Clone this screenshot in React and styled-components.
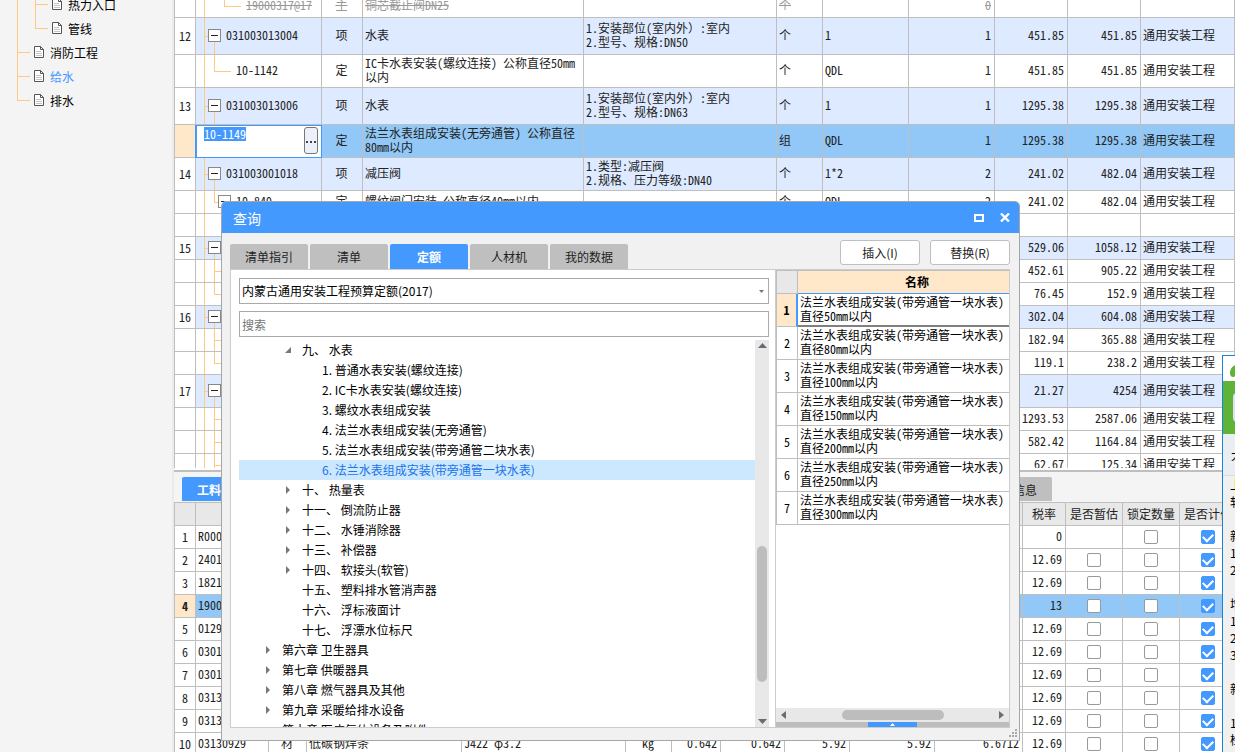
import styled, { createGlobalStyle, css } from "styled-components";

const color = {
  blue: "#4499ff",
  line: "#bfbfbf",
  tree: "#ffc983",
  item: "#deeaff",
  active: "#91c8f7",
  peach: "#ffe7ca",
  panel: "#f4f4f4",
  head: "#e8e8e8",
  text: "#222222",
};

const font = {
  ui: `"Noto Sans CJK SC", "Noto Sans", sans-serif`,
  mono: `"Noto Sans Mono CJK SC", "Liberation Mono", "Noto Sans CJK SC", monospace`,
};

const GlobalStyle = createGlobalStyle`
  * {
    box-sizing: border-box;
  }
  body {
    margin: 0;
    overflow: hidden;
    font-family: ${font.ui};
    font-size: 12px;
    color: #000;
    background-color: #fff;
  }
  button, input, select {
    font: inherit;
    color: inherit;
  }
`;

const ink = (c) => `linear-gradient(${c}, ${c})`;

const Page = styled.div`
  display: grid;
  grid-template-columns: 174px minmax(0, 1fr);
  height: 100vh;
  overflow: hidden;
  position: relative;
`;

/* ---------- left tree ---------- */

const Sidebar = styled.nav`
  background-color: ${color.panel};
  border-right: 2px solid #ebebeb;
  overflow: hidden;
  ul {
    list-style: none;
    margin: -7px 0 0;
    padding: 0;
  }
`;

const Node = styled.li`
  height: 24px;
  padding-left: ${(p) => (p.$deep ? 52 : 34)}px;
  background-repeat: no-repeat;
  background-image: ${ink(color.tree)}, ${ink(color.tree)}, ${ink(color.tree)};
  background-size: ${(p) =>
    p.$deep
      ? `1px 100%, 1px ${p.$last ? "50%" : "100%"}, 13px 1px`
      : `1px ${p.$last ? "50%" : "100%"}, 0 0, 13px 1px`};
  background-position: ${(p) =>
    p.$deep ? "17px 0, 35px 0, 35px 11px" : "17px 0, 0 0, 17px 11px"};
  a {
    display: flex;
    align-items: center;
    gap: 6px;
    height: 22px;
    color: ${(p) => (p.$on ? color.blue : "#000")};
    text-decoration: none;
  }
`;

const FileIcon = () => (
  <svg width="10" height="12" viewBox="0 0 10 12" fill="none">
    <path d="M.5.5h6l3 3v8h-9z" fill="#fff" stroke="#555" />
    <path d="M6.5.5v3h3" stroke="#555" />
    <path d="M2 5.5h5M2 7.5h6M2 9.5h6" stroke="#c4c4c4" />
  </svg>
);

/* ---------- grids ---------- */

const Main = styled.main`
  display: grid;
  grid-template-rows: minmax(0, 5fr) minmax(0, 3fr);
  min-width: 0;
  height: 100vh;
`;

const TopPane = styled.section`
  overflow: hidden;
  padding-bottom: 2px;
  display: flex;
  flex-direction: column;
`;

const Clip = styled.div`
  flex: 1;
  min-height: 0;
  overflow: hidden;
`;

const Grid = styled.table`
  table-layout: fixed;
  width: 100%;
  min-width: ${(p) => p.$min || 0}px;
  margin-top: ${(p) => p.$shift || 0}px;
  border-collapse: separate;
  border-spacing: 0;
  border-left: 1px solid ${color.line};
  font-family: ${font.mono};
  font-size: 12px;
  line-height: 14px;
  color: ${color.text};
`;

const Row = styled.tr`
  height: ${(p) => p.$h || 23}px;
  background-color: ${(p) => p.$bg || "#fff"};
  ${(p) =>
    p.$off &&
    css`
      color: #999;
      text-decoration: line-through;
    `}
`;

const Td = styled.td`
  padding: 0 3px 2px 2px;
  border-right: 1px solid ${color.line};
  border-bottom: 1px solid ${color.line};
  text-align: ${(p) => p.$align || "left"};
  vertical-align: middle;
  white-space: pre;
  overflow: hidden;
`;

const Num = styled(Td)`
  padding: 0;
  text-align: center;
  background-color: ${(p) => (p.$on ? color.peach : "#fff")};
  font-weight: ${(p) => (p.$on ? 700 : 400)};
`;

const lines = {
  root: ["1px 100%, 4px 1px, 1px 50%", "8px 0, 8px 50%, 18px 100%"],
  mid: ["1px 100%, 17px 1px, 1px 100%", "8px 0, 18px 50%, 18px 0"],
  end: ["1px 100%, 17px 1px, 1px 50%", "8px 0, 18px 50%, 18px 0"],
  sub: ["1px 100%, 17px 1px, 1px 50%", "8px 0, 28px 50%, 28px 0"],
};

const CodeTd = styled(Td)`
  padding: 0 0 2px ${(p) => p.$pad}px;
  background-repeat: no-repeat;
  background-image: ${ink(color.tree)}, ${ink(color.tree)}, ${ink(color.tree)};
  background-size: ${(p) => lines[p.$kind][0]};
  background-position: ${(p) => lines[p.$kind][1]};
  div {
    display: flex;
    align-items: center;
    gap: 5px;
  }
`;

const Fold = styled.button`
  width: 13px;
  height: 13px;
  padding: 0 2px;
  border: 1px solid #888;
  background: ${ink("#222")} no-repeat center / 7px 1px #fff;
`;

const EditTd = styled.td`
  padding: 1px 3px 2px 7px;
  border: 1px solid ${color.blue};
  background-color: #fff;
  box-shadow: -1px 0 ${color.blue};
  vertical-align: top;
  > div {
    display: flex;
    justify-content: space-between;
    align-items: flex-start;
  }
  input {
    width: 42px;
    height: 14px;
    padding: 0;
    border: 0;
    outline: 0;
    color: #fff;
    background-color: ${color.blue};
  }
  button {
    width: 14px;
    height: 27px;
    padding: 0;
    border: 1px solid #777;
    border-radius: 3px;
    background-color: #ecf0fb;
    line-height: 0;
  }
`;

const topCols = [21, 126, 41, 221, 193, 46, 86, 86, 73, 73];

const major = "通用安装工程";

const topRows = [
  { off: true, kind: "sub", code: "19000317@17", type: "主", name: "铜芯截止阀DN25", unit: "个", qty: "0" },
  { no: 12, h: 37, code: "031003013004", type: "项", name: "水表", spec: "1.安装部位(室内外）:室内\n2.型号、规格:DN50", unit: "个", expr: "1", qty: "1", price: "451.85", total: "451.85" },
  { h: 33, kind: "end", code: "10-1142", type: "定", name: "IC卡水表安装(螺纹连接) 公称直径50mm\n以内", unit: "个", expr: "QDL", qty: "1", price: "451.85", total: "451.85" },
  { no: 13, h: 37, code: "031003013006", type: "项", name: "水表", spec: "1.安装部位(室内外）:室内\n2.型号、规格:DN63", unit: "个", expr: "1", qty: "1", price: "1295.38", total: "1295.38" },
  { edit: true, h: 33, code: "10-1149", type: "定", name: "法兰水表组成安装(无旁通管) 公称直径\n80mm以内", unit: "组", expr: "QDL", qty: "1", price: "1295.38", total: "1295.38" },
  { no: 14, h: 33, code: "031003001018", type: "项", name: "减压阀", spec: "1.类型:减压阀\n2.规格、压力等级:DN40", unit: "个", expr: "1*2", qty: "2", price: "241.02", total: "482.04" },
  { kind: "end", fold: true, code: "10-849", type: "定", name: "螺纹阀门安装 公称直径40mm以内", unit: "个", expr: "QDL", qty: "2", price: "241.02", total: "482.04" },
  { kind: "sub", blank: true },
  { no: 15, price: "529.06", total: "1058.12" },
  { kind: "mid", price: "452.61", total: "905.22" },
  { kind: "end", price: "76.45", total: "152.9" },
  { no: 16, price: "302.04", total: "604.08" },
  { kind: "mid", price: "182.94", total: "365.88" },
  { kind: "end", price: "119.1", total: "238.2" },
  { no: 17, h: 33, price: "21.27", total: "4254" },
  { kind: "mid", price: "1293.53", total: "2587.06" },
  { kind: "mid", price: "582.42", total: "1164.84" },
  { kind: "mid", price: "62.67", total: "125.34" },
];

const CodeCell = ({ row }) => {
  if (row.edit) {
    return (
      <EditTd>
        <div>
          <input aria-label="编码" defaultValue={row.code} />
          <button type="button" aria-label="选择">
            <svg width="10" height="2" viewBox="0 0 10 2" fill="#444">
              <path d="M0 0h2v2H0zM4 0h2v2H4zM8 0h2v2H8z" />
            </svg>
          </button>
        </div>
      </EditTd>
    );
  }
  const kind = row.kind || "root";
  const fold = kind === "root" || row.fold;
  const pad = { root: 12, mid: 40, end: row.fold ? 22 : 40, sub: 50 }[kind];
  return (
    <CodeTd $kind={kind} $pad={pad}>
      <div>
        {fold && <Fold type="button" aria-label="折叠" />}
        {row.code}
      </div>
    </CodeTd>
  );
};

const TopTable = () => (
  <Grid $shift={-5}>
    <colgroup>
      {topCols.map((w, i) => (
        <col key={i} width={w} />
      ))}
      <col />
    </colgroup>
    <tbody>
      {topRows.map((row, i) => (
        <Row
          key={i}
          $h={row.h}
          $off={row.off}
          $bg={row.edit ? color.active : row.no ? color.item : "#fff"}
        >
          <Num $on={row.edit}>{row.no}</Num>
          <CodeCell row={row} />
          <Td $align="center">{row.type}</Td>
          <Td>{row.name}</Td>
          <Td>{row.spec}</Td>
          <Td>{row.unit}</Td>
          <Td>{row.expr}</Td>
          <Td $align="right">{row.qty}</Td>
          <Td $align="right">{row.price}</Td>
          <Td $align="right">{row.total}</Td>
          <Td>{row.off || row.blank ? "" : major}</Td>
        </Row>
      ))}
    </tbody>
  </Grid>
);

const BottomPane = styled.section`
  border-top: 2px solid ${color.line};
  overflow: hidden;
  background-color: #fff;
`;

const TabBar = styled.div`
  display: flex;
  justify-content: space-between;
  align-items: flex-end;
  height: 31px;
  padding: 0 183px 1px 8px;
  border-bottom: 1px solid ${color.line};
  background-color: ${color.panel};
`;

const Tab = styled.button`
  height: ${(p) => (p.$wide ? 24 : 25)}px;
  min-width: 78px;
  padding: 0 ${(p) => (p.$wide ? 15 : 0)}px;
  border: 0;
  border-radius: 2px 2px 0 0;
  background-color: ${(p) => (p.$on ? color.blue : color.line)};
  color: ${(p) => (p.$on ? "#fff" : "#222")};
  font-weight: ${(p) => (p.$on ? 700 : 400)};
`;

const Th = styled.th`
  padding: 0;
  border-right: 1px solid ${color.line};
  border-bottom: 1px solid ${(p) => (p.$bg ? color.blue : color.line)};
  background-color: ${(p) => p.$bg || color.head};
  font-weight: ${(p) => (p.$bg ? 700 : 400)};
  white-space: nowrap;
  overflow: hidden;
`;

const Check = styled.input.attrs({ type: "checkbox" })`
  appearance: none;
  display: block;
  width: 14px;
  height: 14px;
  margin: 2px auto 0;
  border: 1px solid #999;
  border-radius: 2px;
  background-color: #fff;
  &:checked {
    border-color: ${color.blue};
    background-color: ${color.blue};
  }
  &:checked::before {
    content: "";
    display: block;
    width: 8px;
    height: 5px;
    margin: 2px auto 0;
    border-left: 2px solid #fff;
    border-bottom: 2px solid #fff;
    transform: rotate(-45deg);
  }
`;

const lowCols = [21, 73, 38, 155, 164, 46, 49, 64, 65, 85, 88, 43, 57, 57];

const lowRows = [
  ["R000", "0"],
  ["2401", "12.69"],
  ["1821", "12.69"],
  ["1900", "13"],
  ["0129", "12.69"],
  ["0301", "12.69"],
  ["0301", "12.69"],
  ["0313", "12.69"],
  ["0313", "12.69"],
  ["03130929", "12.69", "材", "低碳钢焊条", "J422 φ3.2", "kg", "0.642", "0.642", "5.92", "5.92", "6.6712"],
];

const LowTable = () => (
  <Grid $min={1063}>
    <colgroup>
      {lowCols.map((w, i) => (
        <col key={i} width={w} />
      ))}
      <col />
    </colgroup>
    <thead>
      <Row>
        {Array.from({ length: 11 }, (_, i) => (
          <Th key={i} />
        ))}
        <Th>税率</Th>
        <Th>是否暂估</Th>
        <Th>锁定数量</Th>
        <Th>是否计价</Th>
      </Row>
    </thead>
    <tbody>
      {lowRows.map(([code, rate, type, name, spec, unit, ...nums], i) => (
        <Row key={i} $bg={i === 3 ? color.active : "#fff"}>
          <Num $on={i === 3}>{i + 1}</Num>
          <Td>{code}</Td>
          <Td $align="center">{type}</Td>
          <Td>{name}</Td>
          <Td>{spec}</Td>
          <Td $align="center">{unit}</Td>
          {[0, 1, 2, 3, 4].map((n) => (
            <Td key={n} $align="right">
              {nums[n]}
            </Td>
          ))}
          <Td $align="right">{rate}</Td>
          <Td>{i > 0 && <Check aria-label="是否暂估" />}</Td>
          <Td>
            <Check aria-label="锁定数量" />
          </Td>
          <Td>
            <Check aria-label="是否计价" defaultChecked />
          </Td>
        </Row>
      ))}
    </tbody>
  </Grid>
);

/* ---------- query window ---------- */

const Dialog = styled.section`
  position: absolute;
  left: 221px;
  top: 201px;
  width: 799px;
  height: 540px;
  display: flex;
  flex-direction: column;
  border: 1px solid #a6a6a6;
  border-radius: 5px 5px 0 0;
  background-color: #f1f1f1;
  overflow: hidden;
`;

const TitleBar = styled.header`
  display: flex;
  align-items: center;
  gap: 14px;
  height: 31px;
  padding: 0 7px 0 11px;
  background-color: ${color.blue};
  color: #fff;
  h1 {
    flex: 1;
    margin: 0;
    font-size: 14px;
    line-height: 20px;
    font-weight: 400;
  }
  button {
    display: flex;
    padding: 0;
    border: 0;
    width: 12px;
    background: none;
  }
`;

const Tools = styled.div`
  display: flex;
  align-items: flex-end;
  gap: 2px;
  height: 36px;
  margin: 0 9px 0 8px;
`;

const Actions = styled.div`
  display: flex;
  gap: 10px;
  margin: 0 0 4px auto;
  button {
    width: 80px;
    height: 25px;
    padding: 0;
    border: 1px solid ${color.line};
    border-radius: 3px;
    background-color: #fff;
    color: #222;
  }
`;

const Body = styled.div`
  flex: 1;
  min-height: 0;
  display: grid;
  grid-template-columns: minmax(0, 1fr) 234px;
  margin: 0 9px 12px 8px;
  border: 1px solid #ccc;
  background-color: #fff;
`;

const LeftSide = styled.div`
  display: flex;
  flex-direction: column;
  min-height: 0;
  padding: 8px 6px 0 8px;
`;

const Combo = styled.div`
  display: grid;
  align-items: center;
  margin-bottom: 7px;
  select {
    grid-area: 1 / 1;
    appearance: none;
    height: 26px;
    padding: 0 2px 2px;
    border: 1px solid #aaa;
    border-radius: 0;
    background-color: #fff;
    color: #000;
  }
  svg {
    grid-area: 1 / 1;
    justify-self: end;
    margin-right: 5px;
    pointer-events: none;
  }
`;

const Search = styled.input`
  height: 26px;
  padding: 0 2px;
  border: 1px solid #aaa;
  &::placeholder {
    color: #757575;
    opacity: 1;
  }
`;

const TreeArea = styled.div`
  flex: 1;
  min-height: 0;
  display: flex;
  margin-top: 3px;
  ul {
    flex: 1;
    list-style: none;
    margin: 0;
    padding: 0;
    overflow: hidden;
  }
`;

const Leaf = styled.li`
  display: flex;
  align-items: center;
  height: 20px;
  padding: 0 0 2px ${(p) => 23 + p.$level * 20}px;
  background-color: ${(p) => (p.$on ? "#cce8ff" : "transparent")};
  color: ${(p) => (p.$on ? "#1a73e8" : "#000")};
  white-space: pre;
  span {
    display: flex;
    width: 20px;
    padding: 2px 0 0 3px;
  }
`;

const VBar = styled.div`
  display: flex;
  flex-direction: column;
  align-items: center;
  justify-content: space-between;
  width: 14px;
  padding: 3px 0;
  background-color: #e8e8e8;
`;

const VThumb = styled.i`
  width: 10px;
  height: 136px;
  margin-top: 160px;
  border-radius: 5px;
  background-color: #bdbdbd;
`;

const RightSide = styled.div`
  display: flex;
  flex-direction: column;
  min-height: 0;
  overflow: hidden;
  border-left: 1px solid #ccc;
`;

const NameGrid = styled(Grid)`
  border-top: 1px solid ${color.line};
  color: #000;
`;

const NameTd = styled(Td)`
  border-right: 0;
  ${(p) =>
    p.$on &&
    css`
      padding-bottom: 1px;
      border-bottom: 2px solid #808080;
    `}
`;

const NameNum = styled(Num)`
  ${(p) =>
    p.$on &&
    css`
      border-right: 2px solid ${color.blue};
    `}
`;

const HBar = styled.div`
  display: flex;
  align-items: center;
  justify-content: space-between;
  height: 14px;
  margin-top: auto;
  padding: 0 5px;
  background-color: #e8e8e8;
  i {
    width: 102px;
    height: 10px;
    border-radius: 5px;
    background-color: #bdbdbd;
  }
`;

const Drawer = styled.div`
  display: flex;
  justify-content: center;
  height: 5px;
  background-color: #bdbdbd;
  button {
    display: flex;
    justify-content: center;
    align-items: center;
    width: 49px;
    height: 5px;
    padding: 0;
    border: 0;
    background-color: ${color.blue};
  }
`;

const Grip = styled.svg`
  position: absolute;
  right: 2px;
  bottom: 3px;
`;

const Arrow = ({ d, w = 9, h = 5, fill = "#6b6b78" }) => (
  <svg width={w} height={h} viewBox={`0 0 ${w} ${h}`} fill={fill}>
    <path d={d} />
  </svg>
);

const leaves = [
  { level: 1, mark: "open", text: "九、 水表" },
  { level: 2, text: "1. 普通水表安装(螺纹连接)" },
  { level: 2, text: "2. IC卡水表安装(螺纹连接)" },
  { level: 2, text: "3. 螺纹水表组成安装" },
  { level: 2, text: "4. 法兰水表组成安装(无旁通管)" },
  { level: 2, text: "5. 法兰水表组成安装(带旁通管二块水表)" },
  { level: 2, text: "6. 法兰水表组成安装(带旁通管一块水表)", on: true },
  { level: 1, mark: "shut", text: "十、 热量表" },
  { level: 1, mark: "shut", text: "十一、 倒流防止器" },
  { level: 1, mark: "shut", text: "十二、 水锤消除器" },
  { level: 1, mark: "shut", text: "十三、 补偿器" },
  { level: 1, mark: "shut", text: "十四、 软接头(软管)" },
  { level: 1, text: "十五、 塑料排水管消声器" },
  { level: 1, text: "十六、 浮标液面计" },
  { level: 1, text: "十七、 浮漂水位标尺" },
  { level: 0, mark: "shut", text: "第六章 卫生器具" },
  { level: 0, mark: "shut", text: "第七章 供暖器具" },
  { level: 0, mark: "shut", text: "第八章 燃气器具及其他" },
  { level: 0, mark: "shut", text: "第九章 采暖给排水设备" },
  { level: 0, text: "第十章 医疗气体设备及附件" },
];

const Query = () => (
  <Dialog role="dialog" aria-label="查询">
    <TitleBar>
      <h1>查询</h1>
      <button type="button" aria-label="最大化">
        <svg width="10" height="8" viewBox="0 0 10 8">
          <path d="M1 1h8v6H1z" fill="none" stroke="#fff" strokeWidth="2" />
        </svg>
      </button>
      <button type="button" aria-label="关闭">
        <svg width="10" height="9" viewBox="0 0 10 9">
          <path d="M1 .5l8 8M9 .5l-8 8" stroke="#fff" strokeWidth="2.4" />
        </svg>
      </button>
    </TitleBar>
    <Tools>
      {["清单指引", "清单", "定额", "人材机", "我的数据"].map((t) => (
        <Tab key={t} type="button" $on={t === "定额"}>
          {t}
        </Tab>
      ))}
      <Actions>
        <button type="button">插入(I)</button>
        <button type="button">替换(R)</button>
      </Actions>
    </Tools>
    <Body>
      <LeftSide>
        <Combo>
          <select aria-label="定额库">
            <option>内蒙古通用安装工程预算定额(2017)</option>
          </select>
          <Arrow d="M0 0h5L2.500 3z" w={5} h={3} fill="#777" />
        </Combo>
        <Search placeholder="搜索" aria-label="搜索" />
        <TreeArea>
          <ul>
            {leaves.map((leaf) => (
              <Leaf key={leaf.text} $level={leaf.level} $on={leaf.on}>
                <span>
                  {leaf.mark === "shut" && <Arrow d="M1 0l4 4-4 4z" w={6} h={8} fill="#777" />}
                  {leaf.mark === "open" && <Arrow d="M6 0v6H0z" w={6} h={7} fill="#777" />}
                </span>
                {leaf.text}
              </Leaf>
            ))}
          </ul>
          <VBar>
            <Arrow d="M0 5h9L4.500 0z" />
            <VThumb />
            <Arrow d="M0 0h9L4.500 5z" />
          </VBar>
        </TreeArea>
      </LeftSide>
      <RightSide>
        <NameGrid $min={261}>
          <colgroup>
            <col width="21" />
            <col />
          </colgroup>
          <thead>
            <Row>
              <Th />
              <Th $bg={color.peach}>名称</Th>
            </Row>
          </thead>
          <tbody>
            {[50, 80, 100, 150, 200, 250, 300].map((mm, i) => (
              <Row key={mm} $h={33}>
                <NameNum $on={i === 0}>{i + 1}</NameNum>
                <NameTd $on={i === 0}>
                  {`法兰水表组成安装(带旁通管一块水表)\n直径${mm}mm以内`}
                </NameTd>
              </Row>
            ))}
          </tbody>
        </NameGrid>
        <HBar>
          <Arrow d="M5 0v8L0 4z" w={5} h={8} />
          <i />
          <Arrow d="M0 0v8l5-4z" w={5} h={8} />
        </HBar>
        <Drawer>
          <button type="button" aria-label="展开">
            <Arrow d="M0 3h5L2.500 0z" w={5} h={3} fill="#fff" />
          </button>
        </Drawer>
      </RightSide>
    </Body>
    <Grip width="8" height="8" viewBox="0 0 8 8" fill="#aaa">
      <path d="M6 0h2v2H6zM3 3h2v2H3zM6 3h2v2H6zM0 6h2v2H0zM3 6h2v2H3zM6 6h2v2H6z" />
    </Grip>
  </Dialog>
);

/* ---------- notice at the right edge ---------- */

const Notice = styled.aside`
  position: absolute;
  right: 0;
  top: 355px;
  bottom: 0;
  width: 13px;
  overflow: hidden;
  border-top: 1px solid #1883d7;
  border-left: 1px solid #1883d7;
  background-color: #f0f0f0;
  line-height: 17px;
`;

const NoticeLogo = styled.div`
  height: 25px;
  padding: 7px 0 0 7px;
  background-color: #fff;
`;

const NoticeBanner = styled.div`
  height: 53px;
  padding: 12px 0 0 10px;
  background-color: #5fb336;
`;

const NoticeTitle = styled.div`
  height: 42px;
  padding: 12px 0 0 8px;
  border-bottom: 1px solid #d8dcdf;
  background-color: #e9eef2;
  white-space: nowrap;
`;

const NoticeText = styled.div`
  padding: 0 0 0 7px;
  white-space: pre;
  mark {
    background: linear-gradient(to right, transparent 4px, #fff799 4px);
  }
`;

const Update = () => (
  <Notice>
    <NoticeLogo>
      <svg width="12" height="12" viewBox="0 0 12 12">
        <path d="M12 0H7C3 0 0 4 0 8c0 2 1 4 3 4 3 0 3-3 4-5h5z" fill="#5fb336" />
      </svg>
    </NoticeLogo>
    <NoticeBanner>
      <svg width="20" height="30" viewBox="0 0 20 30">
        <rect width="20" height="29" rx="4" fill="#dfe0fb" />
      </svg>
    </NoticeBanner>
    <NoticeTitle>大</NoticeTitle>
    <NoticeText>
      <mark>上</mark>
      {"\n软\n\n新\n1\n2\n\n增\n1\n2\n3\n\n新\n\n1\n检"}
    </NoticeText>
  </Notice>
);

const files = [
  { text: "热力入口", deep: true },
  { text: "管线", deep: true, last: true },
  { text: "消防工程" },
  { text: "给水", on: true },
  { text: "排水", last: true },
];

const App = () => {
  return (
    <>
      <GlobalStyle />
      <Page>
        <Sidebar>
          <ul>
            {files.map((f) => (
              <Node key={f.text} $deep={f.deep} $last={f.last} $on={f.on}>
                <a href="#">
                  <FileIcon />
                  {f.text}
                </a>
              </Node>
            ))}
          </ul>
        </Sidebar>
        <Main>
          <TopPane>
            <Clip>
              <TopTable />
            </Clip>
          </TopPane>
          <BottomPane>
            <TabBar>
              <Tab type="button" $on $wide>
                工料机显示
              </Tab>
              <Tab type="button" $wide>
                说明信息
              </Tab>
            </TabBar>
            <LowTable />
          </BottomPane>
        </Main>
        <Query />
        <Update />
      </Page>
    </>
  );
};

export default App;
